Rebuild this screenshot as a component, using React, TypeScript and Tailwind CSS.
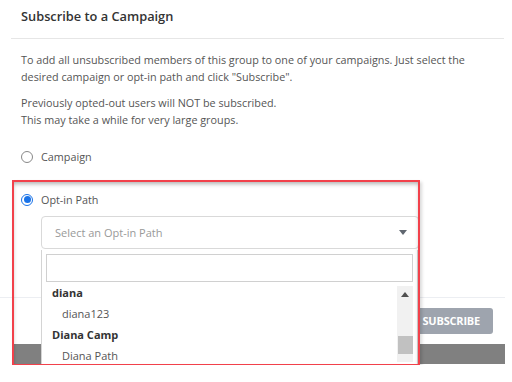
import React from "react";

export default function App() {
  return (
    <div
      className="relative w-[512px] h-[382px] overflow-hidden bg-white text-[#555]"
      style={{ fontFamily: '"Open Sans", "Noto Sans", sans-serif' }}
    >
      <div className="relative h-[365px] overflow-hidden">
        {/* Header */}
        <div className="ml-[11px] w-[493px] h-[39px] border-b border-[#e6e6e6] pl-[10px] pt-[6px]">
          <h1 className="text-[12.8px] font-semibold text-[#333] leading-[20px]">Subscribe to a Campaign</h1>
        </div>

        {/* Body */}
        <div className="pl-[21px] pr-[10px] pt-[12px] text-[10.8px] leading-[17px] text-[#555]">
          <p className="whitespace-nowrap">
            To add all unsubscribed members of this group to one of your campaigns. Just select the
            <br />
            desired campaign or opt-in path and click "Subscribe".
          </p>
          <p className="mt-[9px] whitespace-nowrap">
            Previously opted-out users will NOT be subscribed.
            <br />
            This may take a while for very large groups.
          </p>

          <label className="mt-[20px] flex items-center gap-[8px]">
            <span className="w-[12px] h-[12px] rounded-full border border-[#888] bg-white" />
            <span className="text-[10.8px] text-[#555]">Campaign</span>
          </label>

          <label className="mt-[26px] flex items-center gap-[8px]">
            <span className="w-[12px] h-[12px] rounded-full border border-[#1a73e8] flex items-center justify-center bg-white">
              <span className="w-[7px] h-[7px] rounded-full bg-[#1a73e8]" />
            </span>
            <span className="text-[10.8px] text-[#555]">Opt-in Path</span>
          </label>

          <div className="mt-[8px] ml-[20px] w-[378px] h-[33px] rounded-[4px] border border-[#d9d9d9] flex items-center justify-between pl-[13px] pr-[11px]">
            <span className="text-[11px] text-[#999]">Select an Opt-in Path</span>
            <svg width="8" height="5" viewBox="0 0 8 5">
              <path d="M0 0H8L4 5Z" fill="#606770" />
            </svg>
          </div>
        </div>

        {/* Footer */}
        <div className="mt-[48px] w-[505px] border-t border-[#eceef2] h-[47px] flex items-center justify-end pr-[12px]">
          <button className="h-[26px] px-[13px] rounded-[3px] bg-[#9ea4ae] text-white text-[11px] font-bold tracking-[-0.2px]">
            SUBSCRIBE
          </button>
        </div>
        <div className="ml-[12px] w-[493px] h-[20px] bg-[#808080]" />

        {/* Dropdown menu */}
        <div className="absolute left-[41px] top-[250px] w-[377px] h-[120px] bg-white border border-[#d4d4d4] border-t-0">
          <div className="mx-[4px] mt-[4px] h-[28px] border border-[#d0d0d0] bg-white" />
          <div className="flex">
            <ul className="flex-1 text-[11px] leading-[21px]">
              <li className="pl-[10px] font-bold text-[#333]">diana</li>
              <li className="pl-[20px] text-[#555]">diana123</li>
              <li className="pl-[10px] font-bold text-[#333]">Diana Camp</li>
              <li className="pl-[20px] text-[#555]">Diana Path</li>
            </ul>
            <div className="w-[16px] mt-[4px] mr-[4px] h-[76px] bg-[#f1f1f1] flex flex-col items-center">
              <svg className="mt-[6px]" width="8" height="5" viewBox="0 0 8 5">
                <path d="M4 0L8 5H0Z" fill="#505050" />
              </svg>
              <div className="mt-[39px] w-[15px] h-[18px] bg-[#c1c1c1]" />
            </div>
          </div>
        </div>

        {/* Annotation box */}
        <div className="pointer-events-none absolute left-[12px] top-[180px] w-[408px] h-[186px] border-2 border-[#f2414b] shadow-[inset_0_3px_4px_-1px_rgba(0,0,0,0.3),2px_2px_3px_rgba(0,0,0,0.15)]" />
      </div>
    </div>
  );
}
